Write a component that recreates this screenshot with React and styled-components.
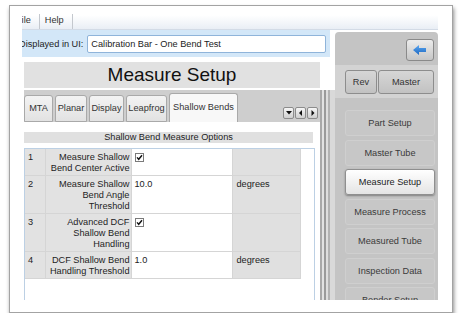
import React from "react";
import styled, { createGlobalStyle } from "styled-components";

const GlobalStyle = createGlobalStyle`
  html, body {
    margin: 0;
    padding: 0;
    background: #fff;
    overflow: hidden;
  }
  * {
    box-sizing: border-box;
  }
`;

const CardStyled = styled.div`
  margin: 5px 0 0 9px;
  width: 444px;
  height: 308px;
  border: 1px solid #a3a3a3;
  box-shadow: 1px 3px 4px rgba(0, 0, 0, 0.45);
  padding: 0 14px 12px 12px;
  background: #fff;
  font-family: "Liberation Sans", Arial, sans-serif;
  font-size: 9.2px;
  color: #222;
`;

const ViewportStyled = styled.div`
  height: 100%;
  display: flex;
  flex-direction: column;
  overflow: hidden;
`;

const MenuBarStyled = styled.div`
  height: 24px;
  flex: none;
  display: flex;
  align-items: flex-end;
  background: linear-gradient(#fff 40%, #e9eef5);
  border-bottom: 1px solid #d3dbe6;
`;

const MenuItemStyled = styled.div`
  height: 15px;
  line-height: 13px;
  padding: 0 8px 0 5px;
  margin-left: ${(props) => props.shift || 0}px;
  border-right: 1px solid #c4c8ce;
  color: #333;
`;

const WorkStyled = styled.div`
  flex: 1;
  display: flex;
  min-height: 0;
`;

const LeftColStyled = styled.div`
  width: 313px;
  flex: none;
  display: flex;
  flex-direction: column;
`;

const InfoBarStyled = styled.div`
  height: 27px;
  width: 308px;
  flex: none;
  display: flex;
  align-items: center;
  gap: 4px;
  padding-right: 4px;
  background: #d3e7f8;
  overflow: hidden;
`;

const InfoLabelStyled = styled.span`
  margin-left: -3px;
  white-space: nowrap;
  color: #222;
`;

const FieldStyled = styled.div`
  flex: 1;
  height: 18px;
  line-height: 16px;
  padding-left: 3px;
  background: #fff;
  border: 1px solid #8fb4da;
  border-radius: 2px;
  white-space: nowrap;
`;

const MainStyled = styled.div`
  flex: 1;
  display: flex;
  min-height: 0;
`;

const ContentStyled = styled.div`
  flex: 1;
  display: flex;
  flex-direction: column;
  min-width: 0;
`;

const HeaderStyled = styled.div`
  margin: 5px 0 0 2px;
  height: 26px;
  flex: none;
  background: #e1e1e1;
  font-size: 19px;
  line-height: 26px;
  text-align: center;
  color: #111;
`;

const TabStripStyled = styled.div`
  margin: 2px 0 0 2px;
  height: 32px;
  flex: none;
  display: flex;
  align-items: flex-end;
  gap: 2px;
  background: #cecece;
`;

const TabStyled = styled.div`
  width: ${(props) => props.w}px;
  height: ${(props) => (props.active ? 29 : 27)}px;
  line-height: ${(props) => (props.active ? 27 : 25)}px;
  text-align: center;
  white-space: nowrap;
  border: 1px solid #a9a9a9;
  border-bottom: ${(props) => (props.active ? "none" : "1px solid #a9a9a9")};
  border-radius: 3px 3px 0 0;
  background: ${(props) =>
    props.active ? "#f8f8f8" : "linear-gradient(#f3f3f3, #e2e2e2)"};
  color: #333;
`;

const TabNavStyled = styled.div`
  margin: 0 2px 3px auto;
  display: flex;
  gap: 1px;
`;

const TabNavButtonStyled = styled.div`
  width: 11px;
  height: 12px;
  display: flex;
  align-items: center;
  justify-content: center;
  border: 1px solid #8c8c8c;
  border-radius: 2px;
  background: linear-gradient(#f6f6f6, #cfcfcf);
`;

const BodyStyled = styled.div`
  flex: 1;
  display: flex;
  flex-direction: column;
  padding: 10px 5px 0 2px;
  background: #fff;
  min-height: 0;
`;

const SectionHeaderStyled = styled.div`
  height: 11px;
  line-height: 11px;
  margin-right: 2px;
  text-align: center;
  background: #e0e0e0;
  color: #222;
`;

const TableBoxStyled = styled.div`
  flex: 1;
  margin-top: 5px;
  border: 1px solid #bcd0e4;
  border-bottom: none;
`;

const TableStyled = styled.table`
  width: 275px;
  border-collapse: collapse;
  table-layout: fixed;
`;

const CellStyled = styled.td`
  width: ${(props) => props.w}px;
  vertical-align: top;
  padding: 3px ${(props) => props.pr || 0}px 1px ${(props) => props.pl || 0}px;
  line-height: 11px;
  text-align: ${(props) => props.align || "left"};
  white-space: nowrap;
  background: ${(props) => props.bg || "#fff"};
  border-bottom: 1px solid #d5d5d5;
  border-right: 1px solid #d5d5d5;
  color: #222;
`;

const SplitterStyled = styled.div`
  width: 15px;
  flex: none;
  margin-top: 33px;
  background: linear-gradient(
    to right,
    #a8a8a8 0 2px,
    #e2e2e2 2px 4px,
    #9a9a9a 4px 6px,
    #dedede 6px 8px,
    #b2b2b2 8px 10px,
    #d9d9d9 10px 15px
  );
`;

const PanelStyled = styled.div`
  width: 103px;
  flex: none;
  margin-top: 2px;
  display: flex;
  flex-direction: column;
  background: #c4c4c4;
  border-radius: 4px 4px 0 0;
`;

const PanelTopStyled = styled.div`
  height: 33px;
  flex: none;
  display: flex;
  align-items: center;
  justify-content: flex-end;
  padding: 2px 4px 0 0;
`;

const ArrowButtonStyled = styled.div`
  width: 28px;
  height: 22px;
  display: flex;
  align-items: center;
  justify-content: center;
  border: 1px solid #8a8a8a;
  border-radius: 3px;
  background: linear-gradient(#ececec, #c6c6c6);
`;

const BandStyled = styled.div`
  height: 33px;
  flex: none;
  display: flex;
  align-items: center;
  gap: 1px;
  padding: 0 4px 0 10px;
  background: #d3d3d3;
`;

const BandButtonStyled = styled.div`
  width: ${(props) => (props.w ? props.w + "px" : "auto")};
  flex: ${(props) => (props.w ? "none" : 1)};
  height: 24px;
  line-height: 22px;
  text-align: center;
  border: 1px solid #8d8d8d;
  border-radius: 3px;
  background: linear-gradient(#d6d6d6, #c2c2c2);
  color: #333;
`;

const NavListStyled = styled.div`
  display: flex;
  flex-direction: column;
  gap: 3.5px;
  padding: 12px 3px 0 10px;
`;

const NavButtonStyled = styled.div`
  height: 26px;
  flex: none;
  line-height: 24px;
  text-align: center;
  white-space: nowrap;
  border-radius: 3px;
  border: 1px solid ${(props) => (props.active ? "#8f8f8f" : "#cfcfcf")};
  background: ${(props) =>
    props.active ? "linear-gradient(#ffffff, #e4e4e4)" : "#c7c7c7"};
  box-shadow: ${(props) =>
    props.active ? "0 1px 2px rgba(0,0,0,0.35)" : "none"};
  color: ${(props) => (props.active ? "#222" : "#3a3a3a")};
`;

const tabs = [
  { label: "MTA", w: 29 },
  { label: "Planar", w: 32 },
  { label: "Display", w: 35 },
  { label: "Leapfrog", w: 41 },
  { label: "Shallow Bends", w: 69, active: true },
];

const rows = [
  { n: 1, label: ["Measure Shallow", "Bend Center Active"], check: true },
  {
    n: 2,
    label: ["Measure Shallow", "Bend Angle", "Threshold"],
    value: "10.0",
    unit: "degrees",
  },
  { n: 3, label: ["Advanced DCF", "Shallow Bend", "Handling"], check: true },
  {
    n: 4,
    label: ["DCF Shallow Bend", "Handling Threshold"],
    value: "1.0",
    unit: "degrees",
  },
];

const navItems = [
  "Part Setup",
  "Master Tube",
  "Measure Setup",
  "Measure Process",
  "Measured Tube",
  "Inspection Data",
  "Bender Setup",
];

const CheckBox = () => (
  <svg width="9" height="9" viewBox="0 0 9 9" style={{ marginTop: 1 }}>
    <rect x="0.5" y="0.5" width="8" height="8" fill="#fff" stroke="#7a7a7a" />
    <path d="M2 4.4 L3.7 6.3 L7 2.2" fill="none" stroke="#111" strokeWidth="1.4" />
  </svg>
);

const Tri = ({ dir }) => {
  const pts = {
    down: "0,1 6,1 3,4.5",
    left: "4,0 4,6 1,3",
    right: "1.5,0 1.5,6 4.5,3",
  };
  return (
    <svg width="6" height="6" viewBox="0 0 6 6">
      <polygon points={pts[dir]} fill="#111" />
    </svg>
  );
};

const BackArrow = () => (
  <svg width="14" height="10" viewBox="0 0 14 10">
    <defs>
      <linearGradient id="ba" x1="0" y1="0" x2="0" y2="1">
        <stop offset="0" stopColor="#5aa6f0" />
        <stop offset="1" stopColor="#1d68c2" />
      </linearGradient>
    </defs>
    <polygon points="0,5 6,0 6,3 13,3 13,7 6,7 6,10" fill="url(#ba)" />
  </svg>
);

const App = () => {
  return (
    <>
      <GlobalStyle />
      <CardStyled>
        <ViewportStyled>
          <MenuBarStyled>
            <MenuItemStyled shift={-11}>File</MenuItemStyled>
            <MenuItemStyled>Help</MenuItemStyled>
          </MenuBarStyled>
          <WorkStyled>
            <LeftColStyled>
              <InfoBarStyled>
                <InfoLabelStyled>Displayed in UI:</InfoLabelStyled>
                <FieldStyled>Calibration Bar - One Bend Test</FieldStyled>
              </InfoBarStyled>
              <MainStyled>
                <ContentStyled>
                  <HeaderStyled>Measure Setup</HeaderStyled>
                  <TabStripStyled>
                    {tabs.map((t) => (
                      <TabStyled key={t.label} w={t.w} active={t.active}>
                        {t.label}
                      </TabStyled>
                    ))}
                    <TabNavStyled>
                      <TabNavButtonStyled>
                        <Tri dir="down" />
                      </TabNavButtonStyled>
                      <TabNavButtonStyled>
                        <Tri dir="left" />
                      </TabNavButtonStyled>
                      <TabNavButtonStyled>
                        <Tri dir="right" />
                      </TabNavButtonStyled>
                    </TabNavStyled>
                  </TabStripStyled>
                  <BodyStyled>
                    <SectionHeaderStyled>
                      Shallow Bend Measure Options
                    </SectionHeaderStyled>
                    <TableBoxStyled>
                      <TableStyled>
                        <tbody>
                          {rows.map((r) => (
                            <tr key={r.n}>
                              <CellStyled w={20} pl={3} bg="#e2e2e2">
                                {r.n}
                              </CellStyled>
                              <CellStyled w={86} pr={1} align="right" bg="#e2e2e2">
                                {r.label.map((l, i) => (
                                  <div key={i}>{l}</div>
                                ))}
                              </CellStyled>
                              <CellStyled w={101} pl={3}>
                                {r.check ? <CheckBox /> : r.value}
                              </CellStyled>
                              <CellStyled w={68} pl={4} bg="#e0e0e0">
                                {r.unit}
                              </CellStyled>
                            </tr>
                          ))}
                        </tbody>
                      </TableStyled>
                    </TableBoxStyled>
                  </BodyStyled>
                </ContentStyled>
                <SplitterStyled />
              </MainStyled>
            </LeftColStyled>
            <PanelStyled>
              <PanelTopStyled>
                <ArrowButtonStyled>
                  <BackArrow />
                </ArrowButtonStyled>
              </PanelTopStyled>
              <BandStyled>
                <BandButtonStyled w={32}>Rev</BandButtonStyled>
                <BandButtonStyled>Master</BandButtonStyled>
              </BandStyled>
              <NavListStyled>
                {navItems.map((item) => (
                  <NavButtonStyled key={item} active={item === "Measure Setup"}>
                    {item}
                  </NavButtonStyled>
                ))}
              </NavListStyled>
            </PanelStyled>
          </WorkStyled>
        </ViewportStyled>
      </CardStyled>
    </>
  );
};

export default App;
